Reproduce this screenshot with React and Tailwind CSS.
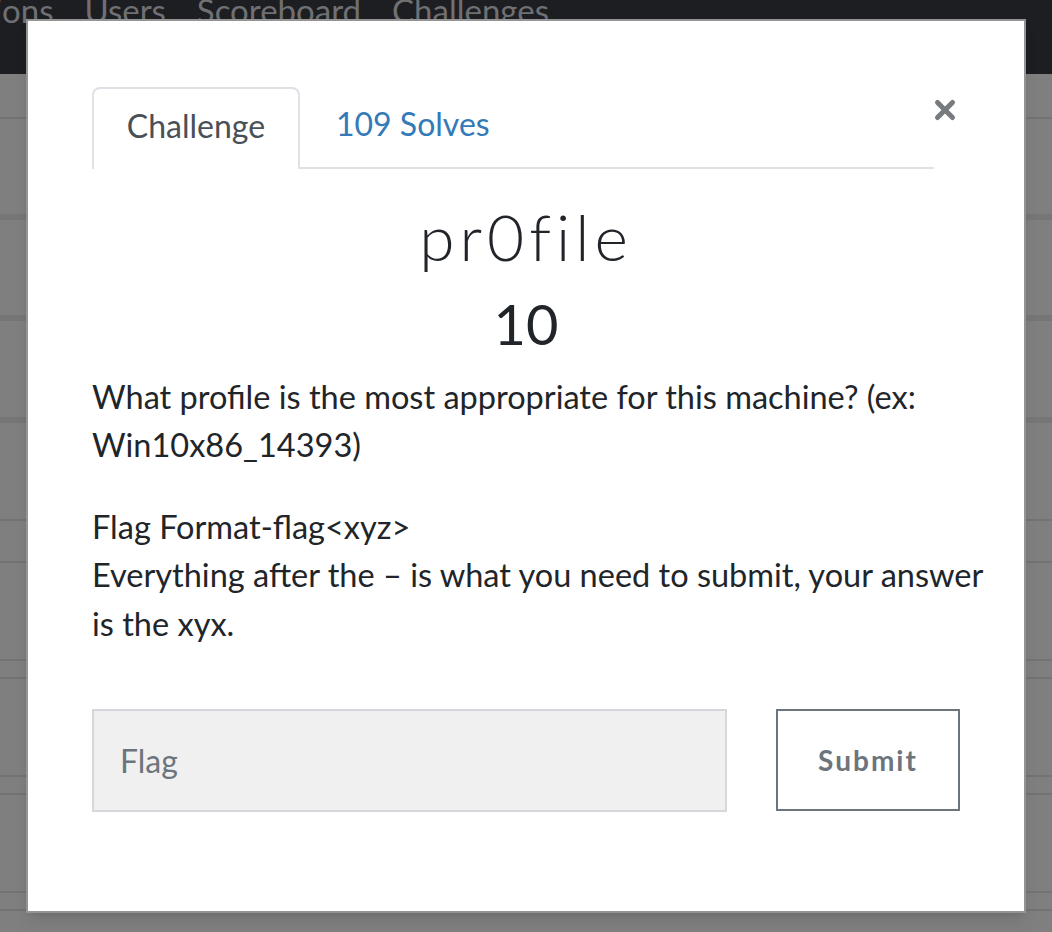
import { X } from 'lucide-react';

const lato = { fontFamily: 'Lato, "Open Sans", sans-serif' };

function Backdrop() {
  return (
    <div className="flex flex-col h-[932px] bg-[#7f7f7f]">
      <div className="h-[74px] bg-[#1d1e21] overflow-hidden flex items-start">
        <div className="flex gap-[31px] -mt-[14px] -ml-[81px] text-[33px] text-[#6f7073] whitespace-nowrap" style={lato}>
          <span>Solutions</span>
          <span>Users</span>
          <span>Scoreboard</span>
          <span>Challenges</span>
        </div>
      </div>
      <div className="h-[43px]" />
      <div className="h-[2px] bg-[#737373]" />
      <div className="h-[95px]" />
      <div className="h-[6px] bg-[#767676]" />
      <div className="h-[95px]" />
      <div className="h-[6px] bg-[#767676]" />
      <div className="h-[96px]" />
      <div className="h-[6px] bg-[#767676]" />
      <div className="h-[96px]" />
      <div className="h-[2px] bg-[#737373]" />
      <div className="h-[40px]" />
      <div className="h-[2px] bg-[#737373]" />
      <div className="h-[96px]" />
      <div className="h-[2px] bg-[#737373]" />
      <div className="h-[16px]" />
      <div className="h-[2px] bg-[#737373]" />
      <div className="h-[96px]" />
      <div className="h-[2px] bg-[#737373]" />
      <div className="h-[16px]" />
      <div className="h-[2px] bg-[#737373]" />
      <div className="h-[96px]" />
      <div className="h-[2px] bg-[#737373]" />
      <div className="h-[16px]" />
      <div className="h-[2px] bg-[#737373]" />
    </div>
  );
}

function App() {
  return (
    <div className="relative w-[1052px] h-[932px] overflow-hidden" style={lato}>
      <Backdrop />

      {/* modal */}
      <div className="absolute left-[26px] top-[19px] w-[1000px] h-[894px] bg-white border-2 border-[#666666]/70 shadow-lg">
        <div className="pl-[64px] pr-[90px] pt-[64px]">
          <div className="flex items-end border-b-2 border-[#dee2e6] relative">
            <div className="w-[208px] h-[82px] -mb-[2px] bg-white border-2 border-b-0 border-[#dee2e6] rounded-t-[8px] flex items-center justify-center pb-[6px] text-[32px] text-[#495057]">
              Challenge
            </div>
            <div className="h-[82px] px-[36px] flex items-center pb-[4px] text-[32px] text-[#337ab7]">
              109 Solves
            </div>
            <button className="absolute right-[-26px] top-[10px] text-[#777b80]">
              <X size={30} strokeWidth={4} />
            </button>
          </div>
        </div>

        <div className="px-[64px]">
          <h2 className="mt-[30px] text-center text-[64px] leading-[1.2] font-light text-[#212529] tracking-[5px]">pr0file</h2>
          <h3 className="mt-[14px] text-center text-[56px] leading-[1.2] text-[#212529]">10</h3>

          <div className="mt-[16px] -mr-[32px] text-[32.5px] leading-[48.5px] text-[#212529]">
            <p className="mb-[33px]">What profile is the most appropriate for this machine? (ex: Win10x86_14393)</p>
            <p>
              Flag Format-flag&lt;xyz&gt;
              <br />
              Everything after the – is what you need to submit, your answer is the xyx.
            </p>
          </div>

          <div className="mt-[61px] flex items-start">
            <div className="w-[635px] h-[103px] bg-[#f0f0f0] border-2 border-[#d4d8dc] flex items-center pl-[26px] text-[32px] text-[#6c757d]">
              Flag
            </div>
            <button className="ml-[49px] w-[184px] h-[102px] border-2 border-[#6c757d] bg-white text-[28px] font-bold tracking-[2px] text-[#6c757d]">
              Submit
            </button>
          </div>
        </div>
      </div>
    </div>
  );
}

export default App;
